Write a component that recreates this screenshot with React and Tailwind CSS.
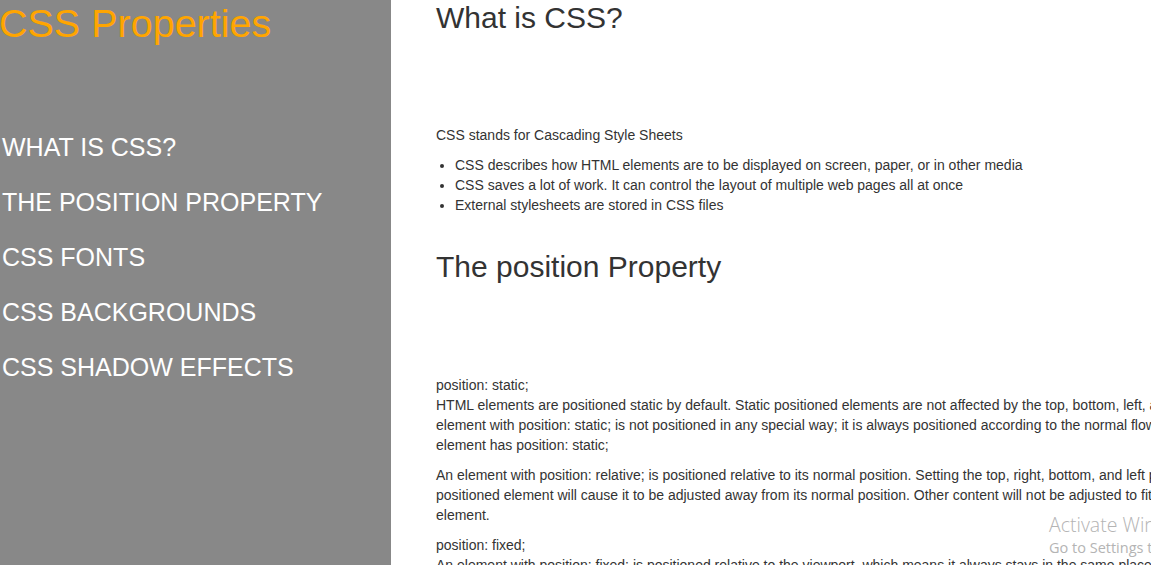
import React from "react";

const navItems = [
  "WHAT IS CSS?",
  "THE POSITION PROPERTY",
  "CSS FONTS",
  "CSS BACKGROUNDS",
  "CSS SHADOW EFFECTS",
];

export default function App() {
  return (
    <div
      className="relative flex w-[1151px] h-[565px] overflow-hidden bg-white"
      style={{ fontFamily: '"Liberation Sans", Arial, sans-serif' }}
    >
      <aside className="w-[391px] shrink-0 h-full bg-[#888888]">
        <h1 className="m-0 text-[39.5px] leading-[46px] text-[#ffa500] font-normal -ml-[1px]">
          CSS Properties
        </h1>
        <ul className="mt-[74px] flex flex-col pl-[2px]">
          {navItems.map((item) => (
            <li key={item} className="text-[25px] leading-[55px] text-white">
              {item}
            </li>
          ))}
        </ul>
      </aside>

      <main className="flex-1 pl-[45px] text-[#333333] text-[14px] leading-[20px] whitespace-nowrap">
        <h2 className="m-0 text-[30px] leading-[35px] font-normal">What is CSS?</h2>
        <p className="mt-[90px]">CSS stands for Cascading Style Sheets</p>
        <ul className="mt-[10px] list-disc pl-[19px]">
          <li>CSS describes how HTML elements are to be displayed on screen, paper, or in other media</li>
          <li>CSS saves a lot of work. It can control the layout of multiple web pages all at once</li>
          <li>External stylesheets are stored in CSS files</li>
        </ul>

        <h2 className="mt-[34px] text-[30px] leading-[35px] font-normal">The position Property</h2>
        <p className="mt-[91px]">
          position: static;
          <br />
          HTML elements are positioned static by default. Static positioned elements are not affected by the top, bottom, left, and right properties. An
          <br />
          element with position: static; is not positioned in any special way; it is always positioned according to the normal flow of the page: This &lt;div&gt;
          <br />
          element has position: static;
        </p>
        <p className="mt-[10px]">
          An element with position: relative; is positioned relative to its normal position. Setting the top, right, bottom, and left properties of a relatively-
          <br />
          positioned element will cause it to be adjusted away from its normal position. Other content will not be adjusted to fit into any gap left by the
          <br />
          element.
        </p>
        <p className="mt-[10px]">
          position: fixed;
          <br />
          An element with position: fixed; is positioned relative to the viewport, which means it always stays in the same place even if the page is scrolled.
        </p>
      </main>

      <div
        className="absolute left-[1049px] top-[512px] whitespace-nowrap text-[#b4b4b4] pointer-events-none"
        style={{ fontFamily: '"Open Sans", "Noto Sans", sans-serif' }}
      >
        <div className="text-[19.5px] leading-[26px] font-light">Activate Windows</div>
        <div className="text-[14.5px] leading-[20px]">Go to Settings to activate Windows.</div>
      </div>
    </div>
  );
}
